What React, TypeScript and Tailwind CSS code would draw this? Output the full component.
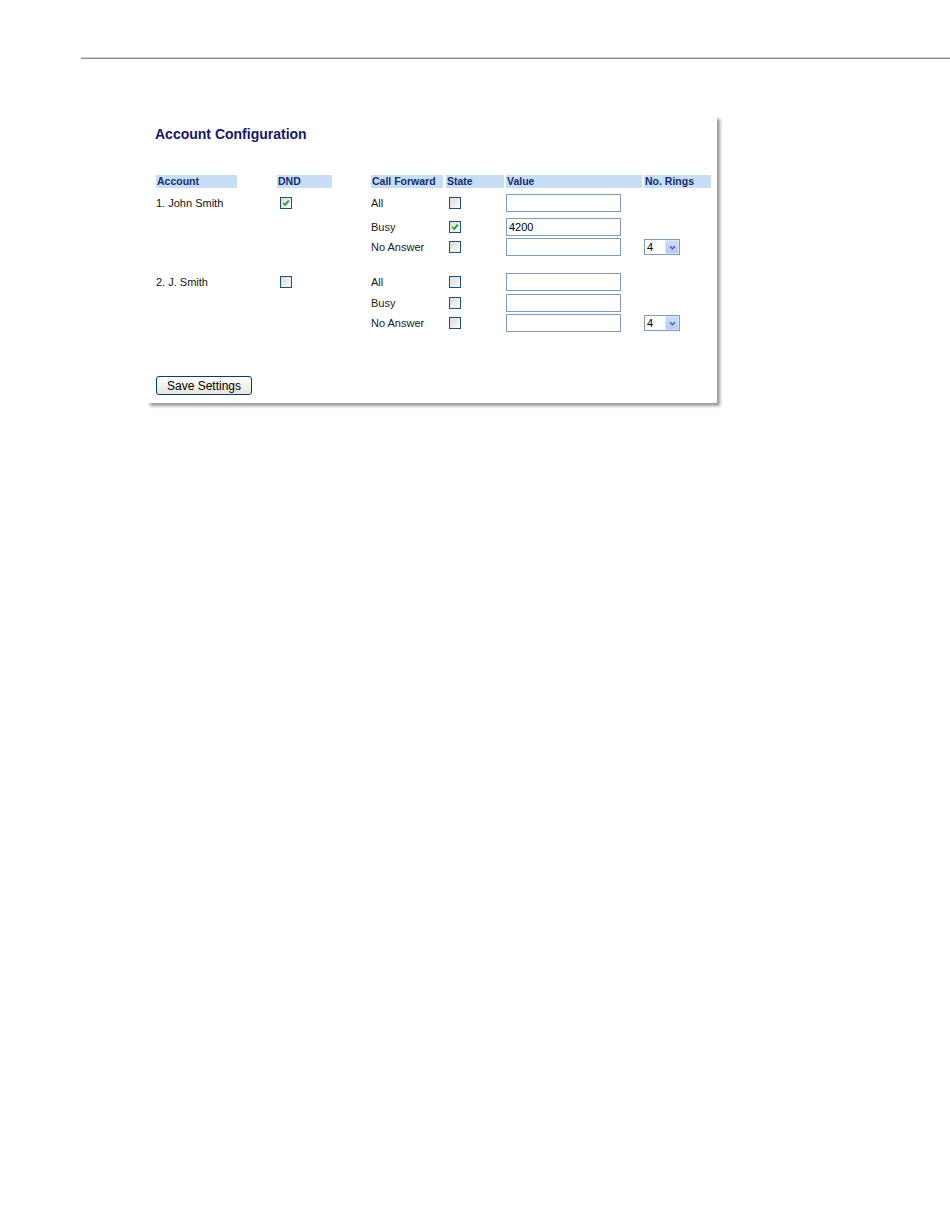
import React from "react";

const font = { fontFamily: '"Liberation Sans", Arial, sans-serif' };

function Check({ checked }: { checked?: boolean }) {
  return (
    <div className="relative w-[12px] h-[12px] border border-[#1c5180] bg-gradient-to-br from-[#dcdcd7] to-[#fbfbf9]">
      {checked && (
        <svg viewBox="0 0 10 10" className="absolute left-[1px] top-[1px] w-[8px] h-[8px]">
          <path d="M1.5 5 L4 7.5 L8.5 2" fill="none" stroke="#21a121" strokeWidth="2.2" />
        </svg>
      )}
    </div>
  );
}

function TextInput({ value }: { value?: string }) {
  return (
    <div className="w-[115px] h-[18px] border border-[#7f9db9] bg-white flex items-center pl-[2px] text-[11px] text-black">
      {value}
    </div>
  );
}

function RingSelect() {
  return (
    <div className="w-[36px] h-[16px] border border-[#7f9db9] bg-white flex items-center">
      <span className="flex-1 pl-[2px] text-[11px] text-black leading-none">4</span>
      <div className="w-[14px] h-[14px] bg-gradient-to-b from-[#cddcfc] to-[#b4c8f6] border border-[#dbe5fb] flex items-center justify-center">
        <svg viewBox="0 0 8 6" className="w-[7px] h-[5px]">
          <path d="M1 1.5 L4 4.5 L7 1.5" fill="none" stroke="#4d6185" strokeWidth="1.6" />
        </svg>
      </div>
    </div>
  );
}

function SubRow({
  label,
  checked,
  value,
  rings,
  className = "",
}: {
  label: string;
  checked?: boolean;
  value?: string;
  rings?: boolean;
  className?: string;
}) {
  return (
    <div className={`flex h-[18px] items-center ${className}`}>
      <div className="w-[75px] text-[11px] text-[#1a1a1a]">{label}</div>
      <div className="w-[60px] pl-[3px]">
        <Check checked={checked} />
      </div>
      <div className="w-[138px]">
        <TextInput value={value} />
      </div>
      <div className="w-[67px]">{rings && <RingSelect />}</div>
    </div>
  );
}

function AccountBlock({
  name,
  dnd,
  rows,
  className = "",
}: {
  name: string;
  dnd?: boolean;
  rows: React.ReactNode;
  className?: string;
}) {
  return (
    <div className={`flex ${className}`}>
      <div className="w-[121px] h-[18px] flex items-center text-[11px] text-[#111]">{name}</div>
      <div className="w-[94px] h-[18px] flex items-center pl-[3px]">
        <Check checked={dnd} />
      </div>
      <div className="flex flex-col">{rows}</div>
    </div>
  );
}

function HeadCell({ w, mr, children }: { w: string; mr: string; children: React.ReactNode }) {
  return (
    <div
      className={`${w} ${mr} h-[13px] bg-[#c6def6] pl-px text-[10.5px] leading-[13px] font-bold text-[#1a2a6c]`}
    >
      {children}
    </div>
  );
}

export default function App() {
  return (
    <div className="min-h-[1229px] bg-white" style={font}>
      <div className="pt-[57px] pl-[81px]">
        <div className="h-px bg-[#d4d4d4]" />
        <div className="h-px bg-[#8a8a8a]" />
      </div>
      <div className="pl-[147px] pt-[57px]">
        <div className="w-[570px] bg-white shadow-[3px_3px_3px_rgba(0,0,0,0.4)] pl-[8px] pt-[10px] pb-[8px]">
          <div className="text-[14px] leading-[16px] font-bold text-[#15166e]">Account Configuration</div>
          <div className="flex mt-[33px] pl-px">
            <HeadCell w="w-[81px]" mr="mr-[40px]">Account</HeadCell>
            <HeadCell w="w-[55px]" mr="mr-[39px]">DND</HeadCell>
            <HeadCell w="w-[72px]" mr="mr-[3px]">Call Forward</HeadCell>
            <HeadCell w="w-[58px]" mr="mr-[2px]">State</HeadCell>
            <HeadCell w="w-[136px]" mr="mr-[2px]">Value</HeadCell>
            <HeadCell w="w-[67px]" mr="mr-0">No. Rings</HeadCell>
          </div>
          <div className="pl-px">
            <AccountBlock
              className="mt-[6px]"
              name="1. John Smith"
              dnd
              rows={
                <>
                  <SubRow label="All" />
                  <SubRow label="Busy" checked value="4200" className="mt-[6px]" />
                  <SubRow label="No Answer" rings className="mt-[2px]" />
                </>
              }
            />
            <AccountBlock
              className="mt-[17px]"
              name="2. J. Smith"
              rows={
                <>
                  <SubRow label="All" />
                  <SubRow label="Busy" className="mt-[3px]" />
                  <SubRow label="No Answer" rings className="mt-[2px]" />
                </>
              }
            />
          </div>
          <button className="mt-[44px] ml-px w-[96px] h-[19px] rounded-[3px] border border-[#003c74] bg-gradient-to-b from-white to-[#e8e6dc] text-[12px] leading-none text-black flex items-center justify-center">
            Save Settings
          </button>
        </div>
      </div>
    </div>
  );
}
